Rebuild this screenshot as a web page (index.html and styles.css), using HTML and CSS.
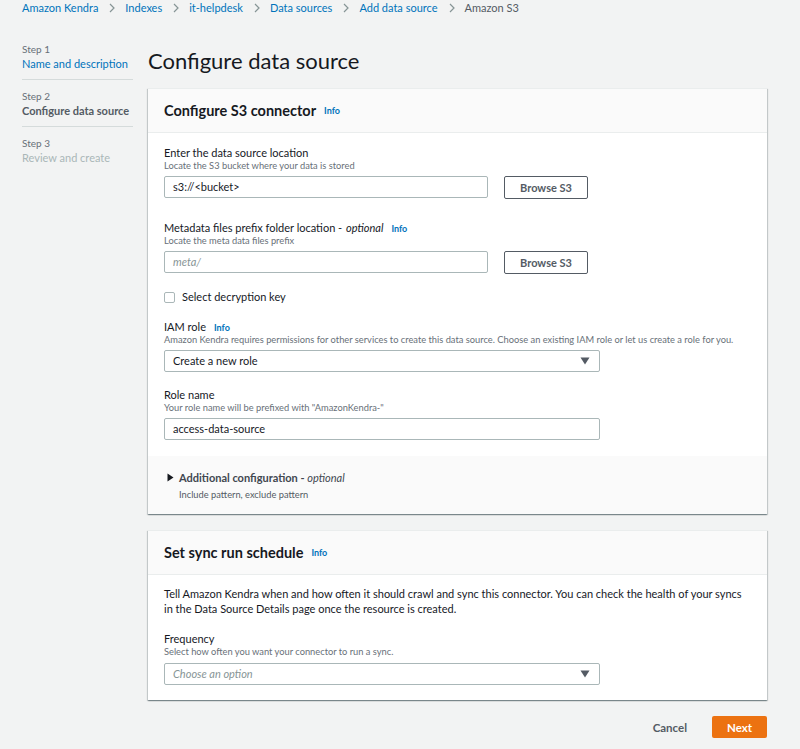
FILE: index.html
```html
<!DOCTYPE html>
<html lang="en">
<head>
<meta charset="utf-8">
<title>Configure data source</title>
<link rel="stylesheet" href="styles.css">
</head>
<body>
<nav class="crumbs">
  <a class="crumb-link">Amazon Kendra</a>
  <svg class="chev" viewBox="0 0 6 10" width="6" height="10"><polyline points="1,1 5,5 1,9" fill="none" stroke="#879596" stroke-width="1.2"/></svg>
  <a class="crumb-link">Indexes</a>
  <svg class="chev" viewBox="0 0 6 10" width="6" height="10"><polyline points="1,1 5,5 1,9" fill="none" stroke="#879596" stroke-width="1.2"/></svg>
  <a class="crumb-link">it-helpdesk</a>
  <svg class="chev" viewBox="0 0 6 10" width="6" height="10"><polyline points="1,1 5,5 1,9" fill="none" stroke="#879596" stroke-width="1.2"/></svg>
  <a class="crumb-link">Data sources</a>
  <svg class="chev" viewBox="0 0 6 10" width="6" height="10"><polyline points="1,1 5,5 1,9" fill="none" stroke="#879596" stroke-width="1.2"/></svg>
  <a class="crumb-link">Add data source</a>
  <svg class="chev" viewBox="0 0 6 10" width="6" height="10"><polyline points="1,1 5,5 1,9" fill="none" stroke="#879596" stroke-width="1.2"/></svg>
  <span class="crumb-current">Amazon S3</span>
</nav>

<div class="layout">
  <ul class="steps">
    <li class="step">
      <div class="step-num">Step 1</div>
      <div class="step-name done">Name and description</div>
    </li>
    <li class="step">
      <div class="step-num">Step 2</div>
      <div class="step-name active">Configure data source</div>
    </li>
    <li class="step last">
      <div class="step-num">Step 3</div>
      <div class="step-name todo">Review and create</div>
    </li>
  </ul>

  <main class="main">
    <h1 class="title">Configure data source</h1>

    <section class="card">
      <header class="card-head">
        <h2 class="card-title">Configure S3 connector</h2><span class="info">Info</span>
      </header>
      <div class="card-body">
        <div class="field">
          <div class="label">Enter the data source location</div>
          <div class="desc">Locate the S3 bucket where your data is stored</div>
          <div class="row">
            <div class="input w-short">s3://&lt;bucket&gt;</div>
            <button class="btn">Browse S3</button>
          </div>
        </div>
        <div class="field gap-22">
          <div class="label">Metadata files prefix folder location - <em>optional</em><span class="info">Info</span></div>
          <div class="desc">Locate the meta data files prefix</div>
          <div class="row">
            <div class="input w-short placeholder">meta/</div>
            <button class="btn">Browse S3</button>
          </div>
        </div>
        <div class="check-row">
          <span class="checkbox"></span>
          <span class="check-label">Select decryption key</span>
        </div>
        <div class="field gap-16">
          <div class="label">IAM role<span class="info">Info</span></div>
          <div class="desc">Amazon Kendra requires permissions for other services to create this data source. Choose an existing IAM role or let us create a role for you.</div>
          <div class="select w-long">
            <span>Create a new role</span>
            <svg class="caret" viewBox="0 0 10 8" width="10" height="8"><polygon points="0.5,0.5 9.5,0.5 5,7.5" fill="#545b64"/></svg>
          </div>
        </div>
        <div class="field gap-16">
          <div class="label">Role name</div>
          <div class="desc">Your role name will be prefixed with "AmazonKendra-"</div>
          <div class="input w-long">access-data-source</div>
        </div>
      </div>
      <div class="card-foot">
        <div class="expander">
          <svg class="tri" viewBox="0 0 7 9" width="7" height="9"><polygon points="0.5,0.5 6.5,4.5 0.5,8.5" fill="#16191f"/></svg>
          <span class="exp-title">Additional configuration - <em>optional</em></span>
        </div>
        <div class="exp-desc">Include pattern, exclude pattern</div>
      </div>
    </section>

    <section class="card second">
      <header class="card-head">
        <h2 class="card-title">Set sync run schedule</h2><span class="info">Info</span>
      </header>
      <div class="card-body body2">
        <p class="para">Tell Amazon Kendra when and how often it should crawl and sync this connector. You can check the health of your syncs in the Data Source Details page once the resource is created.</p>
        <div class="field gap-16">
          <div class="label">Frequency</div>
          <div class="desc">Select how often you want your connector to run a sync.</div>
          <div class="select w-long sel-gap">
            <span class="placeholder">Choose an option</span>
            <svg class="caret" viewBox="0 0 10 8" width="10" height="8"><polygon points="0.5,0.5 9.5,0.5 5,7.5" fill="#545b64"/></svg>
          </div>
        </div>
      </div>
    </section>

    <div class="actions">
      <button class="link-btn">Cancel</button>
      <button class="primary">Next</button>
    </div>
  </main>
</div>
</body>
</html>
```

FILE: styles.css
```css
* { box-sizing: border-box; }

body {
  margin: 0;
  background: #f2f3f3;
  font-family: Lato, "Liberation Sans", Arial, sans-serif;
  color: #16191f;
}

.crumbs {
  display: flex;
  align-items: center;
  height: 16px;
  padding-left: 22px;
  font-size: 11px;
  line-height: 16px;
}
.crumb-link { color: #0073bb; }
.crumb-current { color: #545b64; }
.chev { margin: 0 10px 0 11px; }

.layout {
  display: grid;
  grid-template-columns: 111px 619px;
  column-gap: 15px;
  padding-left: 22px;
}

.steps {
  list-style: none;
  margin: 27px 0 0;
  padding: 0;
}
.step {
  padding: 10px 0 7px;
  border-bottom: 1px solid #d5dbdb;
}
.step:first-child { padding-top: 0; }
.step.last { border-bottom: none; }
.step-num {
  font-size: 10px;
  line-height: 13px;
  color: #687078;
}
.step-name {
  font-size: 11px;
  line-height: 16px;
  white-space: nowrap;
}
.step-name.done { color: #0073bb; }
.step-name.active { color: #545b64; font-weight: 700; }
.step-name.todo { color: #aab7b8; }

.title {
  margin: 31px 0 13px;
  font-size: 22px;
  line-height: 28px;
  font-weight: 400;
  color: #16191f;
}

.card {
  background: #fff;
  border-top: 1px solid #eaeded;
  box-shadow: 0 1px 1px 0 rgba(0, 28, 36, 0.3), 1px 1px 1px 0 rgba(0, 28, 36, 0.15), -1px 1px 1px 0 rgba(0, 28, 36, 0.15);
}
.card.second { margin-top: 16px; }

.card-head {
  display: flex;
  align-items: center;
  height: 44px;
  padding: 0 16px;
  background: #fafafa;
  border-bottom: 1px solid #eaeded;
}
.card-title {
  margin: 0;
  font-size: 14.5px;
  line-height: 18px;
  font-weight: 700;
}
.info {
  margin-left: 8px;
  font-size: 9px;
  line-height: 1;
  font-weight: 700;
  color: #0073bb;
  font-style: normal;
}

.card-body {
  padding: 13px 16px 16px;
}
.card-body.body2 { padding-top: 11px; padding-bottom: 15px; }

.field.gap-22 { margin-top: 22px; }
.field.gap-16 { margin-top: 16px; }

.label {
  font-size: 11px;
  line-height: 14px;
  height: 14px;
  white-space: nowrap;
}
.label em { margin-left: 1px; }
.desc {
  font-size: 9.3px;
  line-height: 12px;
  color: #687078;
  white-space: nowrap;
}

.row {
  display: flex;
  gap: 16px;
  margin-top: 4px;
}

.input, .select {
  height: 22px;
  border: 1px solid #aab7b8;
  border-radius: 2px;
  background: #fff;
  font-size: 11px;
  line-height: 20px;
  padding: 0 8px;
  color: #16191f;
}
.field > .input, .field > .select { margin-top: 4px; }
.field > .select.sel-gap { margin-top: 5px; }
.w-short { width: 324px; }
.w-long { width: 436px; }
.placeholder { color: #879596; font-style: italic; }

.select {
  display: flex;
  align-items: center;
  justify-content: space-between;
  padding-right: 9px;
}

.btn {
  width: 84px;
  height: 23px;
  border: 1px solid #545b64;
  border-radius: 2px;
  background: #fff;
  font-family: inherit;
  font-size: 11px;
  font-weight: 700;
  color: #545b64;
  padding: 0;
}

.check-row {
  display: flex;
  align-items: center;
  margin-top: 16px;
  height: 14px;
}
.checkbox {
  width: 11px;
  height: 11px;
  border: 1px solid #aab7b8;
  border-radius: 2px;
  background: #fff;
  margin-right: 7px;
}
.check-label { font-size: 11px; line-height: 14px; }

.card-foot {
  background: #fafafa;
  padding: 14px 16px 13px 19px;
}
.expander {
  display: flex;
  align-items: center;
  height: 14px;
}
.tri { margin-right: 5px; }
.exp-title {
  font-size: 11px;
  font-weight: 700;
  color: #414750;
}
.exp-title em { font-weight: 400; }
.exp-desc {
  margin: 5px 0 0 12px;
  font-size: 9.3px;
  line-height: 12px;
  color: #545b64;
}

.para {
  margin: 0;
  font-size: 11px;
  line-height: 15px;
}

.actions {
  display: flex;
  justify-content: flex-end;
  align-items: center;
  gap: 25px;
  margin-top: 16px;
}
.link-btn {
  border: none;
  background: none;
  padding: 0;
  font-family: inherit;
  font-size: 11.5px;
  font-weight: 700;
  color: #545b64;
}
.primary {
  width: 55px;
  height: 22px;
  border: none;
  border-radius: 2px;
  background: #ec7211;
  color: #fff;
  font-family: inherit;
  font-size: 11.5px;
  font-weight: 700;
  padding: 0;
}
```
